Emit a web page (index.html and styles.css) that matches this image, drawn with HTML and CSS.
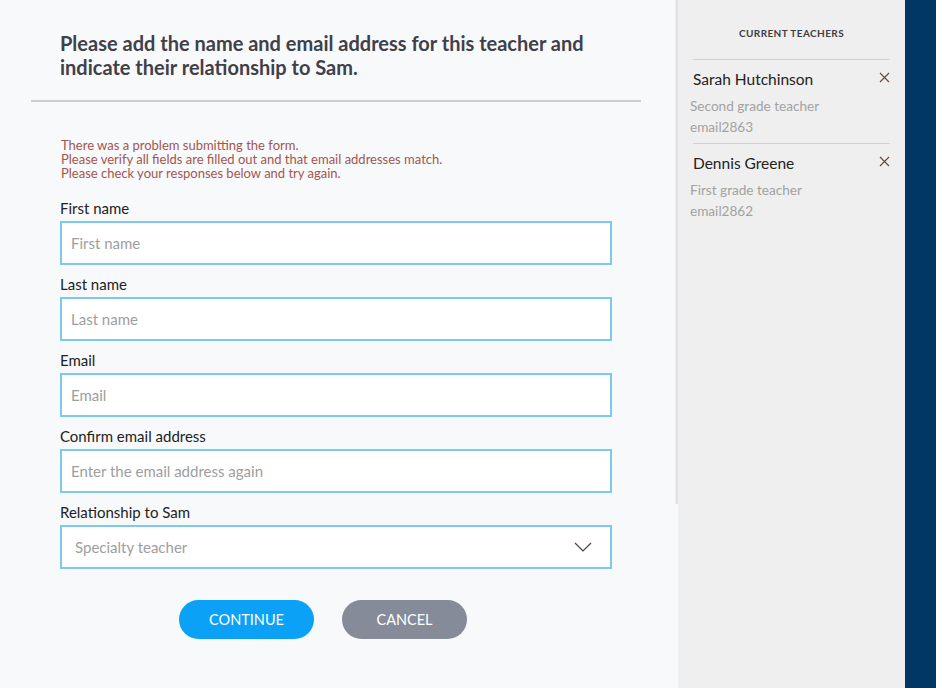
FILE: index.html
```html
<!DOCTYPE html>
<html lang="en">
<head>
    <meta charset="UTF-8">
    <meta name="viewport" content="width=device-width, initial-scale=1.0">
    <title>Add Teacher</title>
    <link rel="stylesheet" href="styles.css">
</head>
<body>
    <div class="page">
        <div class="main">
            <div class="main-content">
                <h1 class="title">Please add the name and email address for this teacher and indicate their relationship to Sam.</h1>
                <hr class="divider">

                <div class="form">
                    <p class="error">
                        There was a problem submitting the form.<br>
                        Please verify all fields are filled out and that email addresses match.<br>
                        Please check your responses below and try again.
                    </p>

                    <label class="field">
                        <span class="label">First name</span>
                        <input type="text" placeholder="First name">
                    </label>
                    <label class="field">
                        <span class="label">Last name</span>
                        <input type="text" placeholder="Last name">
                    </label>
                    <label class="field">
                        <span class="label">Email</span>
                        <input type="text" placeholder="Email">
                    </label>
                    <label class="field">
                        <span class="label">Confirm email address</span>
                        <input type="text" placeholder="Enter the email address again">
                    </label>
                    <div class="field">
                        <span class="label">Relationship to Sam</span>
                        <div class="select">
                            <span>Specialty teacher</span>
                            <svg width="18" height="10" viewBox="0 0 18 10">
                                <path d="M1 1 L9 9 L17 1" fill="none" stroke="#444" stroke-width="1.2"/>
                            </svg>
                        </div>
                    </div>

                    <div class="actions">
                        <button class="btn btn-primary">Continue</button>
                        <button class="btn btn-secondary">Cancel</button>
                    </div>
                </div>
            </div>
            <div class="track"></div>
        </div>

        <aside class="sidebar">
            <h2 class="sidebar-title">Current Teachers</h2>
            <div class="teacher">
                <div class="teacher-head">
                    <span class="teacher-name">Sarah Hutchinson</span>
                    <svg class="remove" width="11" height="11" viewBox="0 0 11 11">
                        <path d="M1 1 L10 10 M10 1 L1 10" stroke="#6b4a3a" stroke-width="1.2"/>
                    </svg>
                </div>
                <div class="teacher-meta">Second grade teacher</div>
                <div class="teacher-meta">email2863</div>
            </div>
            <div class="teacher">
                <div class="teacher-head">
                    <span class="teacher-name">Dennis Greene</span>
                    <svg class="remove" width="11" height="11" viewBox="0 0 11 11">
                        <path d="M1 1 L10 10 M10 1 L1 10" stroke="#6b4a3a" stroke-width="1.2"/>
                    </svg>
                </div>
                <div class="teacher-meta">First grade teacher</div>
                <div class="teacher-meta">email2862</div>
            </div>
        </aside>

        <div class="edge"></div>
    </div>
</body>
</html>
```

FILE: styles.css
```css
html, body {
    margin: 0;
    height: 100%;
}
body {
    font-family: Lato, "Open Sans", sans-serif;
    color: #222;
}
.page {
    display: flex;
    height: 688px;
    overflow: hidden;
}
.main {
    width: 678px;
    background: #f8f9fb;
    display: flex;
}
.main-content {
    flex: 1;
    padding: 31px 0 0 31px;
}
.track {
    width: 2px;
    height: 504px;
    background: #e2e2e4;
    border-left: 1px solid #ececee;
}
.title {
    margin: 0 0 0 29px;
    font-size: 20px;
    line-height: 24px;
    font-weight: 700;
    color: #404048;
    width: 530px;
}
.divider {
    margin: 21px 0 0;
    width: 610px;
    border: none;
    border-top: 2px solid #cfcfd2;
}
.form {
    padding: 36px 0 0 29px;
    width: 552px;
}
.error {
    margin: 0 0 0 1px;
    font-size: 13px;
    line-height: 14px;
    color: #a3564d;
}
.field {
    display: block;
    margin-top: 19px;
}
.field + .field {
    margin-top: 10px;
}
.label {
    display: block;
    font-size: 15px;
    line-height: 18px;
    margin-bottom: 4px;
}
.field input,
.select {
    box-sizing: border-box;
    width: 552px;
    height: 44px;
    border: 2px solid #7dcaec;
    background: #fff;
    font-family: inherit;
    font-size: 15px;
    padding: 0 9px;
    outline: none;
    display: block;
}
.field input::placeholder {
    color: #9e9e9e;
}
.select {
    display: flex;
    align-items: center;
    justify-content: space-between;
    padding: 0 18px 0 13px;
    color: #9e9e9e;
}
.actions {
    display: flex;
    justify-content: center;
    gap: 28px;
    margin-top: 31px;
    padding-right: 26px;
}
.btn {
    height: 39px;
    border: none;
    border-radius: 20px;
    color: #fff;
    font-family: inherit;
    font-size: 14.5px;
    text-transform: uppercase;
    cursor: pointer;
}
.btn-primary {
    width: 135px;
    background: #0aa1f6;
}
.btn-secondary {
    width: 125px;
    background: #858b99;
}
.sidebar {
    width: 227px;
    background: #efefef;
    padding: 27px 15px 0 15px;
    box-sizing: border-box;
}
.sidebar-title {
    margin: 0 0 20px;
    text-align: center;
    font-size: 10px;
    font-weight: 700;
    letter-spacing: 0.4px;
    color: #3d3d44;
    text-transform: uppercase;
}
.teacher {
    border-top: 1px solid #d2d2d2;
    padding: 10px 0 5px;
}
.teacher-head {
    display: flex;
    justify-content: space-between;
    align-items: center;
}
.teacher-name {
    font-size: 15.5px;
    line-height: 18px;
    color: #222;
}
.remove {
    margin-top: -4px;
}
.teacher-meta {
    margin-left: -3px;
    font-size: 13.6px;
    line-height: 21px;
    color: #a2a2a2;
}
.teacher-head + .teacher-meta {
    margin-top: 8px;
}
.edge {
    flex: 1;
    background: #003763;
}
```
